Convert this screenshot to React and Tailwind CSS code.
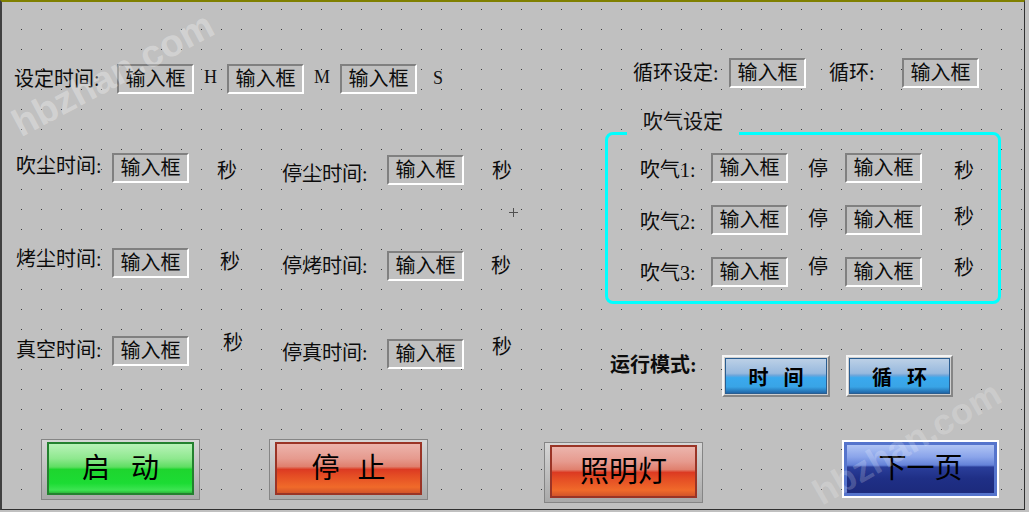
import React from 'react';

// HMI screen: 吹气 / 烤尘 / 真空 timing setup

const Txt = ({ children, className = '' }) => (
  <span className={`flex-none whitespace-nowrap text-[20px] leading-[20px] text-[#0c0c0c] ${className}`}>{children}</span>
);

const Input = ({ className = '' }) => (
  <div className={`flex h-[30px] w-[77px] flex-none items-center justify-center border-2 border-t-[#808080] border-l-[#808080] border-r-white border-b-white bg-[#c0c0c0] text-[20px] leading-[20px] text-[#0c0c0c] ${className}`}>
    输入框
  </div>
);

const BlueBtn = ({ a, b, className = '' }) => (
  <div className={`flex h-[42px] flex-none border-2 border-t-[#f4f4f4] border-l-[#f4f4f4] border-r-[#858585] border-b-[#858585] bg-[#cfcfcf] p-px ${className}`}>
    <div className="flex flex-1 items-center justify-center gap-[15px] border border-[#2a5d90] bg-[linear-gradient(to_bottom,#bcd0e6_0%,#97b9de_42%,#6fa6da_48%,#3aa9ee_55%,#39a4e6_82%,#1f66a8_100%)] pt-[3px] text-[20px] font-bold leading-[20px] text-black">
      <span>{a}</span>
      <span>{b}</span>
    </div>
  </div>
);

const BigBtn = ({ children, inner, className = '' }) => (
  <div className={`flex h-[61px] w-[159px] flex-none border border-[#858585] bg-[linear-gradient(to_bottom,#d6d6d6,#a9a9a9)] px-[5px] pt-[2px] pb-[4px] ${className}`}>
    <div className={`flex flex-1 items-center justify-center border-2 text-[28px] leading-[30px] text-black ${inner}`}>{children}</div>
  </div>
);

const greenInner = 'border-[#23812f] bg-[linear-gradient(to_bottom,#b8f2b8_0%,#8ee88e_30%,#5ede62_47%,#1ed52e_52%,#1cdc34_80%,#3de452_94%,#2bb83a_100%)]';
const redInner = 'border-[#9a3426] bg-[linear-gradient(to_bottom,#ecb4ac_0%,#e69a8e_30%,#e0806e_46%,#dc3a22_52%,#e44c24_64%,#f06a2a_88%,#d2542a_100%)]';

export default function App() {
  return (
    <div className="h-[512px] w-[1029px] bg-[#c0c0c0] [font-family:'Liberation_Serif','Noto_Sans_CJK_SC',serif]">
      <div className="relative flex h-[510px] w-[1025px] flex-col overflow-hidden border-t-2 border-l-2 border-r border-b border-t-[#808000] border-l-[#404040] border-r-[#303030] border-b-[#303030] bg-[#c0c0c0] bg-[image:radial-gradient(circle_at_10.5px_10.5px,#3a3a3a_0.9px,transparent_1px)] bg-size-[20px_20px] bg-position-[9px_-3px]">
        {/* watermark */}
        <div className="pointer-events-none absolute left-[0px] top-[50px] -rotate-[28deg] text-[38px] font-bold leading-[44px] text-white/30 [font-family:'Liberation_Sans',sans-serif]">hbzhan.com</div>
        <div className="pointer-events-none absolute left-[800px] top-[420px] -rotate-[30deg] text-[36px] font-bold leading-[42px] text-white/20 [font-family:'Liberation_Sans',sans-serif]">hbzhan.com</div>

        <div className="flex h-[437px] flex-none">
          {/* left column */}
          <div className="flex w-[603px] flex-none flex-col pl-[12px] pt-[62px]">
            <div className="flex h-[29px] items-center">
              <Txt className="w-[103px]">设定时间:</Txt>
              <Input className="h-[29px]" />
              <span className="flex w-[33px] justify-center pb-[3px] text-[18px] leading-[20px] text-[#111]">H</span>
              <Input className="h-[29px]" />
              <span className="flex w-[36px] justify-center pb-[3px] text-[18px] leading-[20px] text-[#111]">M</span>
              <Input className="h-[29px]" />
              <span className="ml-[16px] pb-[2px] text-[18px] leading-[20px] text-[#111]">S</span>
            </div>

            <div className="mt-[60px] flex h-[34px] items-start">
              <Txt className="mt-[3px] w-[98px] pl-[2px]">吹尘时间:</Txt>
              <Input />
              <Txt className="ml-[28px] mt-[8px] w-[19px]">秒</Txt>
              <Txt className="ml-[46px] mt-[11px] w-[105px]">停尘时间:</Txt>
              <Input className="mt-[2px]" />
              <Txt className="ml-[28px] mt-[8px]">秒</Txt>
            </div>

            <div className="mt-[21px] flex h-[9px] pl-[495px]">
              <svg width="9" height="9" viewBox="0 0 9 9">
                <path d="M4.5 0V9M0 4.5H9" stroke="#505050" strokeWidth="1" />
              </svg>
            </div>

            <div className="mt-[31px] flex h-[34px] items-start">
              <Txt className="mt-[1px] w-[98px] pl-[2px]">烤尘时间:</Txt>
              <Input />
              <Txt className="ml-[31px] mt-[4px] w-[19px]">秒</Txt>
              <Txt className="ml-[43px] mt-[8px] w-[105px]">停烤时间:</Txt>
              <Input className="mt-[3px]" />
              <Txt className="ml-[27px] mt-[8px]">秒</Txt>
            </div>

            <div className="mt-[54px] flex h-[34px] items-start">
              <Txt className="mt-[4px] w-[98px] pl-[2px]">真空时间:</Txt>
              <Input />
              <Txt className="-mt-[3px] ml-[34px] w-[19px]">秒</Txt>
              <Txt className="ml-[40px] mt-[7px] w-[105px]">停真时间:</Txt>
              <Input className="mt-[3px]" />
              <Txt className="ml-[28px] mt-[1px]">秒</Txt>
            </div>
          </div>

          {/* right column */}
          <div className="flex flex-none flex-col pt-[56px]">
            <div className="flex h-[29px] items-center pl-[28px]">
              <Txt className="w-[96px]">循环设定:</Txt>
              <Input className="h-[29px]" />
              <Txt className="ml-[23px] w-[73px]">循环:</Txt>
              <Input className="h-[29px]" />
            </div>

            <fieldset className="mt-[23px] w-[396px] rounded-lg border-[3px] border-[#00ffff] pl-[19px] pb-[14px]">
              <legend className="px-4 pb-[23px] text-[20px] leading-[24px] text-[#111]">吹气设定</legend>
              <div className="-mt-[4px] flex flex-col pl-[13px]">
                <div className="flex h-[30px] items-start">
                  <Txt className="mt-[7px] w-[71px]">吹气1:</Txt>
                  <Input />
                  <Txt className="ml-[20px] mt-[6px] w-[19px]">停</Txt>
                  <Input className="ml-[18px]" />
                  <Txt className="ml-[32px] mt-[8px]">秒</Txt>
                </div>
                <div className="mt-[22px] flex h-[30px] items-start">
                  <Txt className="mt-[7px] w-[71px]">吹气2:</Txt>
                  <Input />
                  <Txt className="ml-[20px] mt-[4px] w-[19px]">停</Txt>
                  <Input className="ml-[18px]" />
                  <Txt className="ml-[32px] mt-[2px]">秒</Txt>
                </div>
                <div className="mt-[22px] flex h-[30px] items-start">
                  <Txt className="mt-[6px] w-[71px]">吹气3:</Txt>
                  <Input />
                  <Txt className="ml-[20px] w-[19px]">停</Txt>
                  <Input className="ml-[18px]" />
                  <Txt className="ml-[32px] mt-[1px]">秒</Txt>
                </div>
              </div>
            </fieldset>

            <div className="mt-[51px] flex items-start pl-[5px]">
              <Txt className="w-[112px] font-bold">运行模式:</Txt>
              <BlueBtn a="时" b="间" className="w-[108px]" />
              <BlueBtn a="循" b="环" className="ml-[16px] w-[107px]" />
            </div>
          </div>
        </div>

        {/* bottom buttons */}
        <div className="flex items-start">
          <BigBtn className="ml-[39px]" inner={`${greenInner} gap-[21px]`}>
            <span>启</span>
            <span>动</span>
          </BigBtn>
          <BigBtn className="ml-[69px]" inner={`${redInner} gap-[18px]`}>
            <span>停</span>
            <span>止</span>
          </BigBtn>
          <BigBtn className="ml-[116px] mt-[3px]" inner={redInner}>
            <span className="text-[29px]">照明灯</span>
          </BigBtn>
          <div className="ml-[139px] mt-px flex h-[58px] w-[157px] flex-none border-2 border-white bg-[#5574cc] p-[3px]">
            <div className="flex flex-1 items-center justify-center bg-[linear-gradient(to_bottom,#b0c4f4_0%,#8aa4ea_25%,#6482d8_42%,#2a3e9a_46%,#1f2f86_70%,#1c2a7c_100%)] text-[28px] leading-[30px] text-black">
              下一页
            </div>
          </div>
        </div>
      </div>
    </div>
  );
}
